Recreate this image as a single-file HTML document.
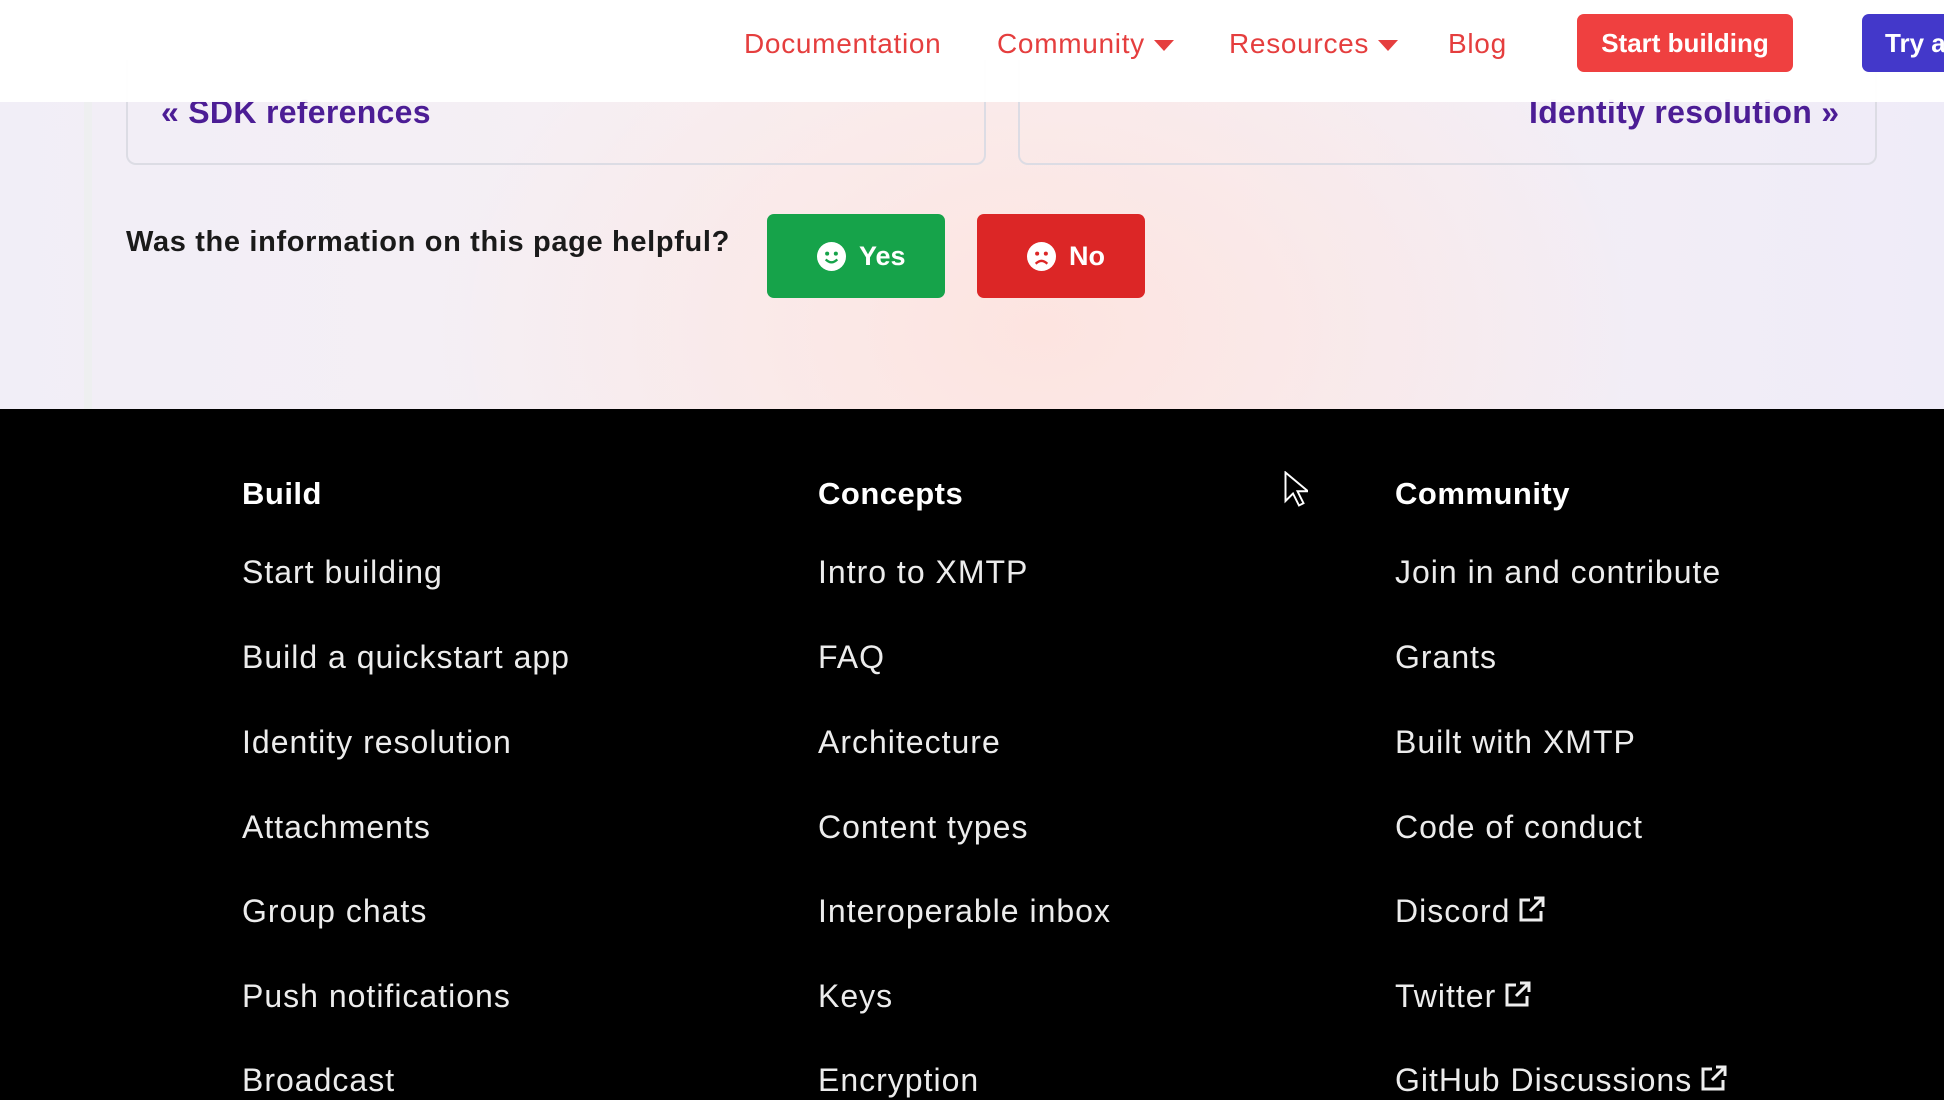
<!DOCTYPE html>
<html><head><meta charset="utf-8"><style>
*{margin:0;padding:0;box-sizing:border-box}
body{width:1944px;height:1100px;overflow:hidden;font-family:"Liberation Sans",sans-serif;position:relative;background:#f6f1f6}
.bg{position:absolute;left:0;top:0;width:1944px;height:409px;background:radial-gradient(ellipse 600px 420px at 1040px 330px,#fde4e0 0%,rgba(253,228,224,0) 100%),linear-gradient(90deg,#f1eef7 0%,#f8f0f2 50%,#efecf8 100%)}
.vline{position:absolute;left:84px;top:100px;width:8px;height:309px;background:rgba(235,240,235,.6)}
.header{position:absolute;left:0;top:0;width:1944px;height:102px;background:rgba(255,255,255,.96)}
.nav{position:absolute;top:28px;font-size:28px;letter-spacing:0.7px;color:#e53e3e}
.caret{display:inline-block;width:0;height:0;border-left:10px solid transparent;border-right:10px solid transparent;border-top:11px solid #e53e3e;margin-left:9px;vertical-align:middle}
.btn{position:absolute;border-radius:7px;color:#fff;font-weight:bold}
.card{position:absolute;top:60px;height:105px;border:2px solid #dcdce4;border-top:none;border-radius:0 0 10px 10px}
.cardt{position:absolute;top:94px;font-size:32px;font-weight:bold;color:#4c1d95;letter-spacing:0.3px}
.footer{position:absolute;left:0;top:409px;width:1944px;height:691px;background:#000;color:#eee}
.col{position:absolute;top:0}
.col h3{position:absolute;top:67px;font-size:31px;font-weight:bold;color:#fff;white-space:nowrap;letter-spacing:0.5px}
.col div{position:absolute;font-size:32px;letter-spacing:1px;white-space:nowrap;color:#ececec;margin-top:3px}
.ext{display:inline-block;vertical-align:top;margin-left:8px;margin-top:2px}
</style></head><body>
<div class="bg"></div><div class="vline"></div>
<div class="card" style="left:126px;width:860px"></div>
<div class="card" style="left:1018px;width:859px"></div>
<div class="cardt" style="left:161px">« SDK references</div>
<div class="cardt" style="left:1529px">Identity resolution »</div>
<div class="header">
<div class="nav" style="left:744px">Documentation</div>
<div class="nav" style="left:997px">Community<span class="caret"></span></div>
<div class="nav" style="left:1229px">Resources<span class="caret"></span></div>
<div class="nav" style="left:1448px">Blog</div>
<div class="btn" style="left:1577px;top:14px;width:216px;height:58px;background:#ef4040;font-size:26px;line-height:58px;text-align:center">Start building</div>
<div class="btn" style="left:1862px;top:14px;width:100px;height:58px;background:#4338ca;font-size:26px;line-height:58px;padding-left:23px">Try a</div>
</div>
<div style="position:absolute;left:126px;top:226px;font-size:29px;font-weight:bold;color:#1a1a1a;letter-spacing:0.65px">Was the information on this page helpful?</div>
<div class="btn" style="left:767px;top:214px;width:178px;height:84px;background:#16a34a;font-size:27px;line-height:84px"><svg style="position:absolute;left:50px;top:28px" width="29" height="29" viewBox="0 0 20 20"><circle cx="10" cy="10" r="10" fill="#fff"/><circle cx="7" cy="8" r="1.4" fill="#16a34a"/><circle cx="13" cy="8" r="1.4" fill="#16a34a"/><path d="M6 12q4 4 8 0" stroke="#16a34a" stroke-width="1.6" fill="none"/></svg><span style="position:absolute;left:92px">Yes</span></div>
<div class="btn" style="left:977px;top:214px;width:168px;height:84px;background:#dc2626;font-size:27px;line-height:84px"><svg style="position:absolute;left:50px;top:28px" width="29" height="29" viewBox="0 0 20 20"><circle cx="10" cy="10" r="10" fill="#fff"/><circle cx="7" cy="8" r="1.4" fill="#dc2626"/><circle cx="13" cy="8" r="1.4" fill="#dc2626"/><path d="M6 15q4 -4 8 0" stroke="#dc2626" stroke-width="1.6" fill="none"/></svg><span style="position:absolute;left:92px">No</span></div>
<div class="footer">
<div class="col" style="left:242px"><h3>Build</h3>
<div style="top:142px">Start building</div><div style="top:227px">Build a quickstart app</div><div style="top:312px">Identity resolution</div><div style="top:397px">Attachments</div><div style="top:481px">Group chats</div><div style="top:566px">Push notifications</div><div style="top:650px">Broadcast</div></div>
<div class="col" style="left:818px"><h3>Concepts</h3>
<div style="top:142px">Intro to XMTP</div><div style="top:227px">FAQ</div><div style="top:312px">Architecture</div><div style="top:397px">Content types</div><div style="top:481px">Interoperable inbox</div><div style="top:566px">Keys</div><div style="top:650px">Encryption</div></div>
<div class="col" style="left:1395px"><h3>Community</h3>
<div style="top:142px">Join in and contribute</div><div style="top:227px">Grants</div><div style="top:312px">Built with XMTP</div><div style="top:397px">Code of conduct</div>
<div style="top:481px">Discord<svg class="ext" width="28" height="28" viewBox="0 0 28 28"><path d="M12 5H3v20h20v-9" stroke="#eee" stroke-width="3" fill="none"/><path d="M12 16L24 4M16 3h9v9" stroke="#eee" stroke-width="3" fill="none"/></svg></div>
<div style="top:566px">Twitter<svg class="ext" width="28" height="28" viewBox="0 0 28 28"><path d="M12 5H3v20h20v-9" stroke="#eee" stroke-width="3" fill="none"/><path d="M12 16L24 4M16 3h9v9" stroke="#eee" stroke-width="3" fill="none"/></svg></div>
<div style="top:650px">GitHub Discussions<svg class="ext" width="28" height="28" viewBox="0 0 28 28"><path d="M12 5H3v20h20v-9" stroke="#eee" stroke-width="3" fill="none"/><path d="M12 16L24 4M16 3h9v9" stroke="#eee" stroke-width="3" fill="none"/></svg></div></div>
<svg style="position:absolute;left:1284px;top:62px" width="24" height="36" viewBox="0 0 16 24"><path d="M1 1v19l5-5 4 8 3-1.5-4-8h7z" fill="#000" stroke="#fff" stroke-width="1.3"/></svg>
</div>
</body></html>
